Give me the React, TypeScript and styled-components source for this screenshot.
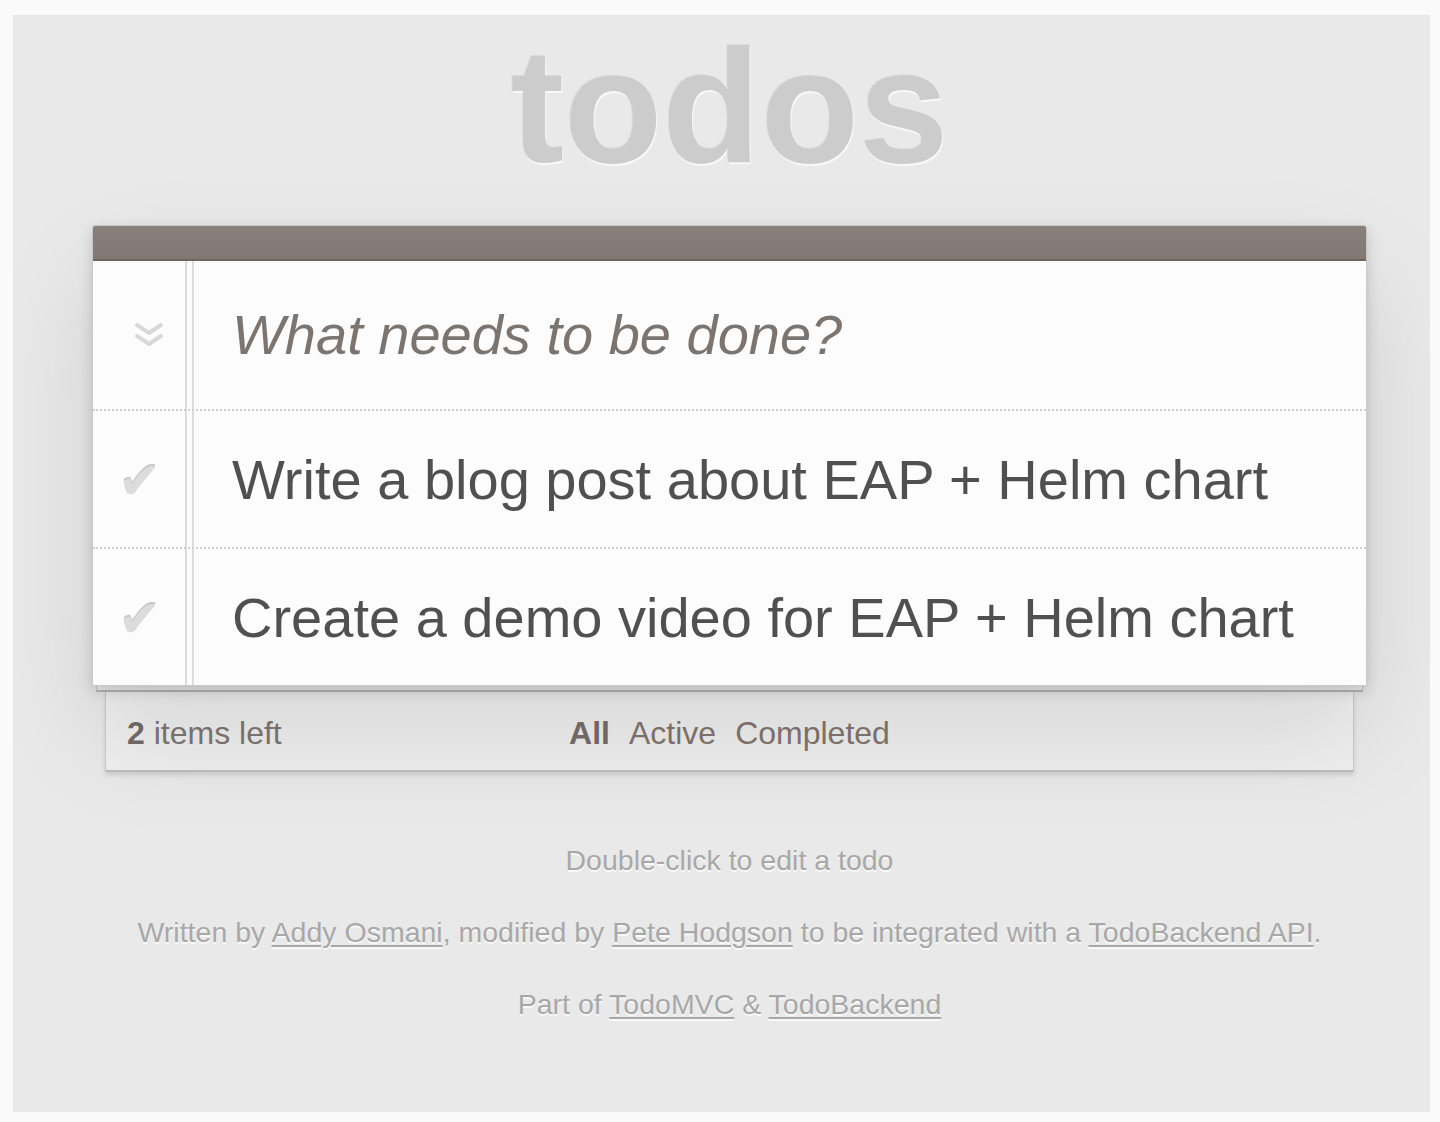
import React from 'react';
import styled, { createGlobalStyle } from 'styled-components';

const Global = createGlobalStyle`
  html, body { margin: 0; padding: 0; background: #fafafa; }
  body { font-family: "Liberation Sans", Arial, Helvetica, sans-serif; }
  * { box-sizing: border-box; }
`;

const Frame = styled.div`
  margin: 15px 10px 10px 13px;
  height: 1097px;
  background: #e9e9e9;
  padding: 0 63px 0 79px;
  display: flex;
  flex-direction: column;
  overflow: hidden;
`;

const Title = styled.h1`
  margin: 11px 0 0;
  font-size: 161px;
  line-height: 161px;
  font-weight: bold;
  text-align: center;
  color: #cccccc;
  text-shadow: -1px -1px 0 rgba(0, 0, 0, 0.06), 1px 2px 1px rgba(255, 255, 255, 0.75);
`;

const Card = styled.section`
  margin-top: 38px;
  border: 1px solid #c9c9c9;
  border-radius: 3px 3px 0 0;
  background: #fcfcfc;
  box-shadow: 0 5px 14px rgba(0, 0, 0, 0.16), 0 50px 110px rgba(0, 0, 0, 0.1);
  position: relative;
  z-index: 2;
`;

const HeaderBar = styled.div`
  height: 35px;
  background: linear-gradient(#89807c, #817773);
  border-bottom: 2px solid #6d6461;
  border-radius: 2px 2px 0 0;
`;

const Body = styled.div`
  background:
    linear-gradient(
      to right,
      transparent 92px,
      #dcdcdc 92px,
      #dcdcdc 94px,
      transparent 94px,
      transparent 99px,
      #dcdcdc 99px,
      #dcdcdc 101px,
      transparent 101px
    );
`;

const Row = styled.div<{ $last?: boolean }>`
  display: grid;
  grid-template-columns: 93px 1fr;
  align-items: center;
  border-bottom: ${(p) => (p.$last ? 'none' : '2px dotted #cfcfcf')};
`;

const ToggleAllCell = styled.div`
  display: flex;
  align-items: center;
  padding-left: 40px;
  height: 100%;
`;

const NewTodo = styled.input`
  display: block;
  width: 100%;
  border: none;
  outline: none;
  background: transparent;
  margin: 0;
  padding: 34px 0 36px 46px;
  font-family: "Liberation Sans", Arial, Helvetica, sans-serif;
  font-size: 56px;
  line-height: 78px;
  height: 148px;
  color: #4d4d4d;
  &::placeholder {
    font-style: italic;
    color: #7b7572;
    opacity: 1;
  }
`;

const CheckCell = styled.div`
  text-align: center;
  font-family: "DejaVu Sans", sans-serif;
  font-size: 52px;
  line-height: 1;
  color: #dcdcdc;
  text-shadow: 0 -2px 0 #c8c8c8;
  padding-top: 4px;
`;

const Label = styled.div`
  padding: 36px 0 34px 46px;
  font-size: 56px;
  line-height: 66px;
  color: #505050;
  white-space: pre;
`;

const PaperEdge = styled.div`
  margin: 0 4px;
  height: 6px;
  background: #f3f3f3;
  border: 1px solid #c8c8c8;
  border-top: none;
  border-bottom: 2px solid #b9b9b9;
  position: relative;
  z-index: 1;
`;

const FooterPanel = styled.footer`
  margin: 0 13px;
  height: 80px;
  background: #efefef;
  border: 1px solid #cacaca;
  border-top: none;
  border-bottom: 2px solid #bdbdbd;
  box-shadow: 0 3px 5px rgba(0, 0, 0, 0.12);
  display: grid;
  grid-template-columns: 1fr auto 1fr;
  align-items: center;
  padding: 5px 21px 0;
  font-size: 32px;
  color: #7f7673;
`;

const Count = styled.span`
  strong {
    font-weight: bold;
    color: #736b68;
  }
`;

const Filters = styled.nav`
  display: flex;
  gap: 19px;
`;

const FilterLink = styled.a<{ $selected?: boolean }>`
  color: ${(p) => (p.$selected ? '#776d6a' : '#83756f')};
  font-weight: ${(p) => (p.$selected ? 'bold' : 'normal')};
  text-decoration: none;
`;

const Info = styled.div`
  margin-top: 70px;
  display: flex;
  flex-direction: column;
  gap: 36px;
  align-items: center;
  font-size: 28.5px;
  line-height: 36px;
  color: #a8a8a8;
  text-shadow: 0 2px 0 rgba(255, 255, 255, 0.7);
`;

const InfoLine = styled.p`
  margin: 0;
  text-align: center;
  a {
    color: inherit;
    text-decoration: underline;
    text-decoration-thickness: 2px;
    text-underline-offset: 3px;
  }
`;

const ToggleAllIcon = () => (
  <svg width="32" height="30" viewBox="0 0 32 30" fill="none">
    <g stroke="#ffffff" strokeWidth="4" strokeLinecap="round" strokeLinejoin="round" opacity="0.8">
      <path d="M4 5 L16 13 L28 5" transform="translate(0 1.5)" />
      <path d="M4 16 L16 24 L28 16" transform="translate(0 1.5)" />
    </g>
    <g stroke="#d8d8d8" strokeWidth="4" strokeLinecap="round" strokeLinejoin="round">
      <path d="M4 5 L16 13 L28 5" />
      <path d="M4 16 L16 24 L28 16" />
    </g>
  </svg>
);

const todos = [
  'Write a blog post about EAP + Helm chart',
  'Create a demo video for EAP + Helm chart',
];

export default function App() {
  return (
    <>
      <Global />
      <Frame>
        <Title>todos</Title>
        <Card>
          <HeaderBar />
          <Body>
            <Row>
              <ToggleAllCell>
                <ToggleAllIcon />
              </ToggleAllCell>
              <NewTodo placeholder="What needs to be done?" />
            </Row>
            {todos.map((t, i) => (
              <Row key={t} $last={i === todos.length - 1}>
                <CheckCell>✔</CheckCell>
                <Label>{t}</Label>
              </Row>
            ))}
          </Body>
        </Card>
        <PaperEdge />
        <FooterPanel>
          <Count>
            <strong>2</strong> items left
          </Count>
          <Filters>
            <FilterLink href="#/" $selected>
              All
            </FilterLink>
            <FilterLink href="#/active">Active</FilterLink>
            <FilterLink href="#/completed">Completed</FilterLink>
          </Filters>
          <span />
        </FooterPanel>
        <Info>
          <InfoLine>Double-click to edit a todo</InfoLine>
          <InfoLine>
            Written by <a href="#">Addy Osmani</a>, modified by <a href="#">Pete Hodgson</a> to be
            integrated with a <a href="#">TodoBackend API</a>.
          </InfoLine>
          <InfoLine>
            Part of <a href="#">TodoMVC</a> &amp; <a href="#">TodoBackend</a>
          </InfoLine>
        </Info>
      </Frame>
    </>
  );
}
